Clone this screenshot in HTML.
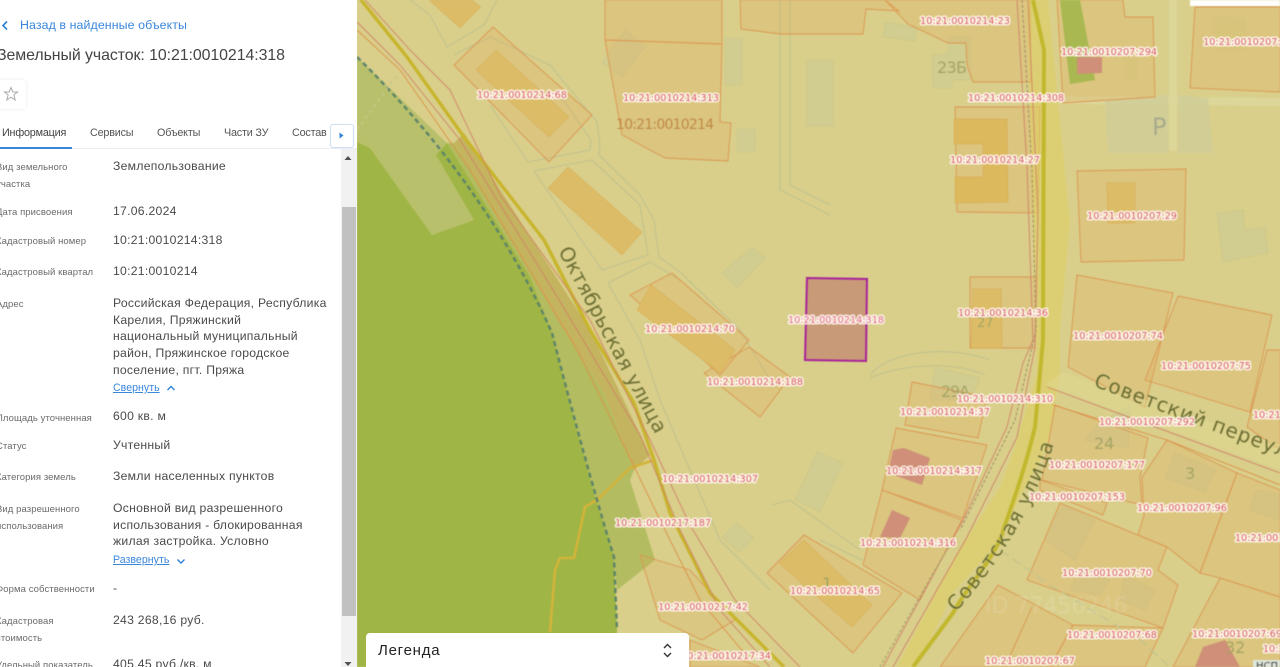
<!DOCTYPE html>
<html lang="ru"><head><meta charset="utf-8"><title>Земельный участок</title>
<style>
html,body{margin:0;padding:0;width:1280px;height:667px;overflow:hidden;background:#d9cf8b}
#root{position:relative;width:1280px;height:667px;overflow:hidden}
#map{position:absolute;left:0;top:0;width:1280px;height:667px;filter:blur(.4px)}
#map text{font-family:"DejaVu Sans",sans-serif}
.l{font-size:9.7px;fill:#d65a62;stroke:#fff8ee;stroke-width:3px;stroke-opacity:.92;paint-order:stroke;stroke-linejoin:round;text-anchor:middle}
.s{fill:#6c6e30;stroke:#e0d69a;stroke-width:1.2px;stroke-opacity:.5;paint-order:stroke}
.n{fill:#a5a565;font-size:16px}
.p{fill:rgba(226,172,96,.28);stroke:#dc9650;stroke-width:.9}
.b{fill:#dcbc66;stroke:#d8a850;stroke-width:.5}
.g{fill:#cfcb8f;fill-opacity:.85;stroke:#c8c588;stroke-width:.6}
.w{fill:none;stroke:#c4c38c;stroke-width:1.3}
.k{fill:#cf8f78}
#panel{position:absolute;left:0;top:0;width:357px;height:667px;background:#fff;overflow:hidden;font-family:"Liberation Sans",sans-serif;filter:blur(.25px)}
#panel div{position:absolute;white-space:nowrap}
.v{left:113px;font-size:12.2px;line-height:16px;color:#4a4a4a;letter-spacing:.27px}
.t{left:-4px;margin-top:1px;font-size:9.5px;line-height:14px;color:#6b6b6b;letter-spacing:.08px}
.a{left:113px;font-size:10.6px;line-height:14px;color:#3b87dc;text-decoration:underline;letter-spacing:.02px}
.tab{top:126px;font-size:10.8px;line-height:14px;color:#555;letter-spacing:-.2px}
#legend{position:absolute;left:366px;top:633px;width:323px;height:34px;background:#fff;border-radius:4px 4px 0 0;font-family:"Liberation Sans",sans-serif}
</style></head><body><div id="root">
<svg id="map" viewBox="0 0 1280 667" xmlns="http://www.w3.org/2000/svg">
<rect width="1280" height="667" fill="#d9cf8b"/>
<!-- green land -->
<path fill="#b9c06c" d="M357 57L447 143L436 155L474 220L432 235L370 148L357 142Z"/>
<path fill="#b3bc60" d="M447 143L487 207L530 277L552 333L570 403L594 493L614 557L617 590L655 560L630 480L634 470L604 393L564 330L454 143Z"/>
<path fill="#9fb545" d="M357 142L370 148L432 235L474 220L436 155L447 143L487 207L530 277L552 333L570 403L594 493L614 557L617 627V667H357Z"/>
<path fill="#c4b45f" d="M454 143L464 133L590 330L650 455L634 470L604 393L564 330Z"/>
<!-- sidewalks -->
<g class="w">
<path d="M410 0L430 15L447 47L484 25L497 0"/>
<path d="M454 55L490 37L550 65L597 122L600 145L599 155L640 195L654 220L659 257L680 272L740 330L770 380"/>
<path d="M490 105L528 162L590 150L591 140L560 95"/>
<path d="M534 171L592 160L640 205L648 255L602 270Z"/>
<path d="M608 283L650 262L680 280M608 283L640 340L660 400L690 470L720 540L770 590"/>
<path d="M772 505L790 500L860 550M862 560L820 540"/>
<path d="M780 0V190L830 215M790 0V185L830 205"/>
<path d="M870 375C890 350 950 345 990 360M870 378C900 365 950 360 985 375"/>
<path d="M1173 0V147M1062 100L1280 102" stroke="#dcd699" stroke-width="8" stroke-linecap="round"/>
</g>
<!-- gray buildings -->
<g class="g">
<rect x="807" y="60" width="26" height="66"/><rect x="725" y="38" width="17" height="47"/><rect x="737" y="129" width="18" height="23"/>
<path d="M885 22L917 28L915 41L883 37ZM625 30L645 47L622 77L602 62ZM752 247L765 258L737 288L722 273ZM948 37H970V80H952V88H933V55L948 53ZM1217 213L1243 210L1245 230L1265 227L1268 253L1223 262ZM935 367L980 378L970 400H930ZM843 463L820 512L795 500L817 452ZM737 523L754 538L739 552L722 537ZM1097 425L1130 405L1128 448L1085 440ZM1175 453L1216 470L1205 492L1165 478ZM1256 490L1280 495V520L1250 510ZM1062 505L1095 520L1075 560L1045 540ZM1125 575L1155 590L1145 610L1120 600ZM1080 570L1110 580L1100 595L1070 590Z"/>
<path d="M1105 100L1168 95V153H1108ZM1178 95L1208 98L1213 153H1178Z" fill="#cfcd96" stroke="none"/>
</g>
<!-- parcels -->
<g class="p">
<path d="M493 27L592 115L549 162L454 65Z"/>
<path d="M605 0H722V44L605 40Z"/><path d="M605 40L722 44L720 122L731 123L728 161L665 158L622 135Z"/>
<path d="M740 0L741 29L780 34H863L866 9L899 11L885 0Z"/><path d="M885 0L908 24L948 43H966L967 65L973 82L1031 82L1030 0Z"/>
<path d="M1057 0L1063 103L1155 97L1153 17H1125L1123 0Z"/>
<path d="M1195 7L1190 88L1280 92V7Z"/>
<path d="M955 107H1040L1038 213L957 212Z"/>
<path d="M970 277H1037L1035 348H970Z"/>
<path d="M1077 171L1186 169L1184 260L1081 262Z"/>
<path d="M672 273L749 340L720 375L630 295Z"/>
<path d="M749 347L790 377L760 417L704 373Z"/>
<path d="M912 382L987 397L978 438L905 425Z"/>
<path d="M896 428L987 445L963 518L882 490Z"/>
<path d="M882 490L962 520L920 600L863 565Z"/>
<path d="M767 573L804 535L902 593L853 653Z"/>
<path d="M1077 275L1173 293L1145 407L1068 367Z"/>
<path d="M1178 296L1272 315L1250 412L1145 380Z"/>
<path d="M1267 350H1280V450L1247 427Z"/>
<path d="M1055 405L1148 438L1140 477L1142 505L1042 480Z"/>
<path d="M1040 480L1107 503L1103 515L1040 490Z"/>
<path d="M1167 440L1237 473L1200 573L1167 547L1138 535L1144 515L1142 477Z"/>
<path d="M1060 503L1167 547L1158 570L1178 585L1163 628L1027 580Z"/>
<path d="M998 585L1073 625L1050 667H940Z"/>
<path d="M1073 625L1163 628L1145 667H1050Z"/>
<path d="M1237 473L1280 490V597L1220 578L1200 573Z"/>
<path d="M1220 578L1280 597V667H1173Z"/>
<path d="M1032 607L1005 667" fill="none"/>
<path d="M640 555L660 620L702 640L735 620L690 570Z" fill="rgba(226,172,96,.2)"/>
<path d="M690 640L760 667H690Z"/>
</g>
<!-- orange buildings -->
<g class="b">
<path d="M429 0H472L481 7L460 28ZM496 50L569 117L549 137L476 70ZM568 167L642 232L622 255L548 188Z"/>
<path d="M651 285L735 350L720 373L637 310Z"/>
<path d="M954 119H1007L1008 202L955 203V177H983V144H954Z" fill="#dcb95c"/>
<path d="M973 289H1001L1002 348H971Z"/>
<path d="M1107 183H1135V223H1108Z"/>
<path d="M779 563L804 540L872 605L852 627Z"/>
<path d="M1212 17L1246 18L1245 50H1213Z" fill="#d8c47a" stroke="none"/>
<path d="M1123 58H1137V80H1125Z" fill="#d8c47a" stroke="none"/>
</g>
<path fill="#a9b850" d="M1060 0H1080L1095 80L1070 84Z"/>
<g class="k">
<path d="M1077 57H1102V73L1077 74Z"/>
<path d="M893 450L904 448L930 458L922 485L888 473Z"/>
<path d="M892 510L910 518L900 538L880 537Z"/>
<path d="M1203 647L1225 640L1240 667H1195Z"/>
</g>
<!-- roads -->
<path fill="#dfcf60" fill-opacity=".55" d="M1027 0H1048L1070 223L1060 330V373L1047 447L1017 503L1000 540L953 593L917 667H897L957 553L1000 487L1013 453L1037 373Z"/>
<path fill="#dfd88f" fill-opacity=".5" d="M1062 372L1280 445V470L1045 385Z"/>
<g fill="none">
<path d="M1033 0L1044 50L1043 340L1040 373L1035 427C1025 470 1010 510 1000 540C985 570 965 590 953 613L913 667" stroke="#c2b82e" stroke-width="4"/>
<path d="M357 -5L407 57L464 137L544 240L590 330L634 403L654 460L670 513L710 593L784 667" stroke="#c8b52d" stroke-width="3.4"/>
<path d="M654 460L630 468L597 500L585 507L574 558H560L555 570L550 632" stroke="#d3b43a" stroke-width="2.6"/>
<path d="M357 57C420 118 500 215 552 333C570 403 594 493 614 557L617 630" stroke="#5c8468" stroke-width="2.4" stroke-dasharray="5 3.5"/>
<path d="M357 130L397 75" stroke="#c9c687" stroke-width="1.4" stroke-dasharray="4 3"/>
<g stroke="#d08268" stroke-width=".9">
<path d="M1017 0L1027 167L1033 340L1023 363L1007 427L963 520L883 667"/>
<path d="M1028 0L1038 213L1035 347L1017 437L967 537L893 667"/>
<path d="M1047 387L1280 473"/>
<path d="M1053 405L1167 440L1280 485" stroke="#dd8f45"/>
<path d="M357 22L400 65L460 140L550 285L640 435L680 530L720 610L770 667"/>
<path d="M365 0L410 50L450 90L500 195L590 320L650 440L690 525L735 600L800 667"/>
<path d="M357 30L400 70L470 170L580 355L660 520L700 600L750 660" stroke="#dd9145"/>
</g>
<path d="M1022 0L1032 170L1036 330L1015 420L960 530" stroke="#a78f68" stroke-width="1.1" stroke-dasharray="3 2"/>
<path d="M880 667L935 570L950 545" stroke="#a9a56a" stroke-width="1.2" stroke-dasharray="3 2"/>
<path d="M1000 550L1050 585L1140 640L1170 667" stroke="#c7c48c" stroke-width="1.5" stroke-dasharray="10 5"/>
</g>
<!-- target -->
<path d="M807 278L867 279L866 361L805 360Z" fill="#c99a78" stroke="#a8239a" stroke-width="2"/>
<!-- street labels -->
<text class="s" font-size="20" transform="translate(558 251) rotate(62)" textLength="208" lengthAdjust="spacing">Октябрьская улица</text>
<path id="sv" d="M956 612C990 575 1032 515 1054 443" fill="none"/>
<text class="s" font-size="20"><textPath href="#sv" textLength="196" lengthAdjust="spacing">Советская улица</textPath></text>
<text class="s" font-size="20" transform="translate(1093 386) rotate(20.5)" textLength="205" lengthAdjust="spacing">Советский переул</text>
<text x="616" y="129" font-size="14" fill="#c08a45" textLength="98">10:21:0010214</text>
<g class="n"><text x="937" y="73" textLength="30">23Б</text><text x="1152" y="135" font-size="24" fill="#a8ab8c">Р</text><text x="977" y="327" font-size="13">27</text><text x="941" y="397" textLength="29">29А</text><text x="1094" y="449">24</text><text x="1185" y="479">3</text><text x="822" y="589">1</text><text x="1225" y="653">32</text></g>
<text x="985" y="613" font-size="22" fill="#fff" fill-opacity=".13">ID 77456246</text>
<g class="l">
<text x="965" y="24">10:21:0010214:23</text><text x="1109" y="55">10:21:0010207:294</text><text x="1245" y="45">10:21:0010207:5</text>
<text x="522" y="98">10:21:0010214:68</text><text x="671" y="101">10:21:0010214:313</text><text x="1016" y="101">10:21:0010214:308</text>
<text x="995" y="163">10:21:0010214:27</text><text x="1132" y="219">10:21:0010207:29</text><text x="1003" y="316">10:21:0010214:36</text>
<text x="690" y="332">10:21:0010214:70</text><text x="836" y="323" style="fill:#e06a8a">10:21:0010214:318</text><text x="1118" y="339">10:21:0010207:74</text>
<text x="1206" y="369">10:21:0010207:75</text><text x="755" y="385">10:21:0010214:188</text><text x="1005" y="402">10:21:0010214:310</text>
<text x="945" y="415">10:21:0010214:37</text><text x="1147" y="425">10:21:0010207:292</text><text x="1097" y="468">10:21:0010207:177</text>
<text x="934" y="474">10:21:0010214:317</text><text x="710" y="482">10:21:0010214:307</text><text x="1077" y="500">10:21:0010207:153</text>
<text x="1182" y="511">10:21:0010207:96</text><text x="663" y="526">10:21:0010217:187</text><text x="908" y="546">10:21:0010214:316</text>
<text x="1107" y="576">10:21:0010207:70</text><text x="835" y="594">10:21:0010214:65</text><text x="703" y="610">10:21:0010217:42</text>
<text x="1112" y="638">10:21:0010207:68</text><text x="1237" y="637">10:21:0010207:69</text><text x="1030" y="664">10:21:0010207:67</text>
<text x="726" y="659">10:21:0010217:34</text><text x="1290" y="418">10:21:0010207</text><text x="1272" y="541">10:21:0010207</text><text x="1300" y="652">10:21:0010207</text>
</g>
<rect x="1190" y="0" width="90" height="6" fill="#fff"/>
<rect x="1253" y="660" width="27" height="7" fill="#dfe6dc"/>
<text x="1256" y="669" font-size="10" fill="#444">НСПД</text>
</svg>

<div id="legend">
<span style="position:absolute;left:12px;top:8px;font-size:15px;line-height:20px;color:#222;letter-spacing:.75px">Легенда</span>
<svg style="position:absolute;left:296px;top:9px" width="11" height="17" viewBox="0 0 11 17"><path d="M2 6L5.5 2.5L9 6M2 11L5.5 14.5L9 11" fill="none" stroke="#333" stroke-width="1.4"/></svg>
</div>

<div id="panel">
<svg style="position:absolute;left:1px;top:20px" width="8" height="11" viewBox="0 0 8 11"><path d="M6 1.5L2 5.5L6 9.5" fill="none" stroke="#2f80d8" stroke-width="1.6"/></svg>
<div style="left:20px;top:18px;font-size:12.4px;line-height:15px;color:#3b87dc;letter-spacing:.08px">Назад в найденные объекты</div>
<div style="left:-3px;top:46px;font-size:15.9px;line-height:20px;color:#444;letter-spacing:-.07px">Земельный участок: 10:21:0010214:318</div>
<div style="left:-8px;top:80px;width:34px;height:29px;background:#fff;border-radius:3px;box-shadow:0 0 3px rgba(0,0,0,.1)"></div>
<svg style="position:absolute;left:3px;top:86px" width="16" height="16" viewBox="0 0 16 16"><path d="M8 1.5L9.9 6H14.5L10.8 9L12.2 14L8 11.2L3.8 14L5.2 9L1.5 6H6.1Z" fill="none" stroke="#aaa" stroke-width="1"/></svg>
<div class="tab" style="left:2px;color:#444">Информация</div>
<div class="tab" style="left:90px">Сервисы</div>
<div class="tab" style="left:157px">Объекты</div>
<div class="tab" style="left:224px">Части ЗУ</div>
<div class="tab" style="left:292px">Состав</div>
<div style="left:0;top:148px;width:357px;height:1px;background:#e9edf1"></div>
<div style="left:0;top:147px;width:72px;height:1.5px;background:#3b87dc"></div>
<div style="left:330px;top:124px;width:22px;height:22px;background:#fff;border:1px solid #cddff2;border-radius:3px"></div>
<svg style="position:absolute;left:339px;top:132px" width="5" height="7" viewBox="0 0 5 7"><path d="M0.5 0.5L4.5 3.5L0.5 6.5Z" fill="#2f80d8"/></svg>
<div style="left:341px;top:149px;width:16px;height:518px;background:#f1f1f1"></div>
<div style="left:342px;top:207px;width:14px;height:409px;background:#c1c1c1"></div>
<svg style="position:absolute;left:344px;top:155px" width="8" height="6" viewBox="0 0 8 6"><path d="M4 1L7.5 5H0.5Z" fill="#505050"/></svg>
<svg style="position:absolute;left:344px;top:661px" width="8" height="6" viewBox="0 0 8 6"><path d="M0.5 1H7.5L4 5Z" fill="#505050"/></svg>

<div class="t" style="top:160px">Вид земельного</div><div class="v" style="top:158px">Землепользование</div>
<div class="t" style="top:177px">участка</div>
<div class="t" style="top:205px">Дата присвоения</div><div class="v" style="top:203px">17.06.2024</div>
<div class="t" style="top:234px">Кадастровый номер</div><div class="v" style="top:232px">10:21:0010214:318</div>
<div class="t" style="top:265px">Кадастровый квартал</div><div class="v" style="top:263px">10:21:0010214</div>
<div class="t" style="top:297px">Адрес</div>
<div class="v" style="top:295px;line-height:16.7px">Российская Федерация, Республика<br>Карелия, Пряжинский<br>национальный муниципальный<br>район, Пряжинское городское<br>поселение, пгт. Пряжа</div>
<div class="a" style="top:381px">Свернуть</div>
<svg style="position:absolute;left:166px;top:385px" width="10" height="7" viewBox="0 0 10 7"><path d="M1.5 5L5 1.5L8.5 5" fill="none" stroke="#2f80d8" stroke-width="1.4"/></svg>
<div class="t" style="top:411px">Площадь уточненная</div><div class="v" style="top:408px">600 кв. м</div>
<div class="t" style="top:439px">Статус</div><div class="v" style="top:437px">Учтенный</div>
<div class="t" style="top:470px">Категория земель</div><div class="v" style="top:468px">Земли населенных пунктов</div>
<div class="t" style="top:502px">Вид разрешенного</div>
<div class="t" style="top:519px">использования</div>
<div class="v" style="top:500px;line-height:16.7px">Основной вид разрешенного<br>использования - блокированная<br>жилая застройка. Условно</div>
<div class="a" style="top:553px">Развернуть</div>
<svg style="position:absolute;left:176px;top:558px" width="10" height="7" viewBox="0 0 10 7"><path d="M1.5 1.5L5 5L8.5 1.5" fill="none" stroke="#2f80d8" stroke-width="1.4"/></svg>
<div class="t" style="top:582px">Форма собственности</div><div class="v" style="top:580px">-</div>
<div class="t" style="top:614px">Кадастровая</div><div class="v" style="top:612px">243 268,16 руб.</div>
<div class="t" style="top:631px">стоимость</div>
<div class="t" style="top:658px">Удельный показатель</div><div class="v" style="top:656px">405,45 руб./кв. м</div>
</div>
</div></body></html>
